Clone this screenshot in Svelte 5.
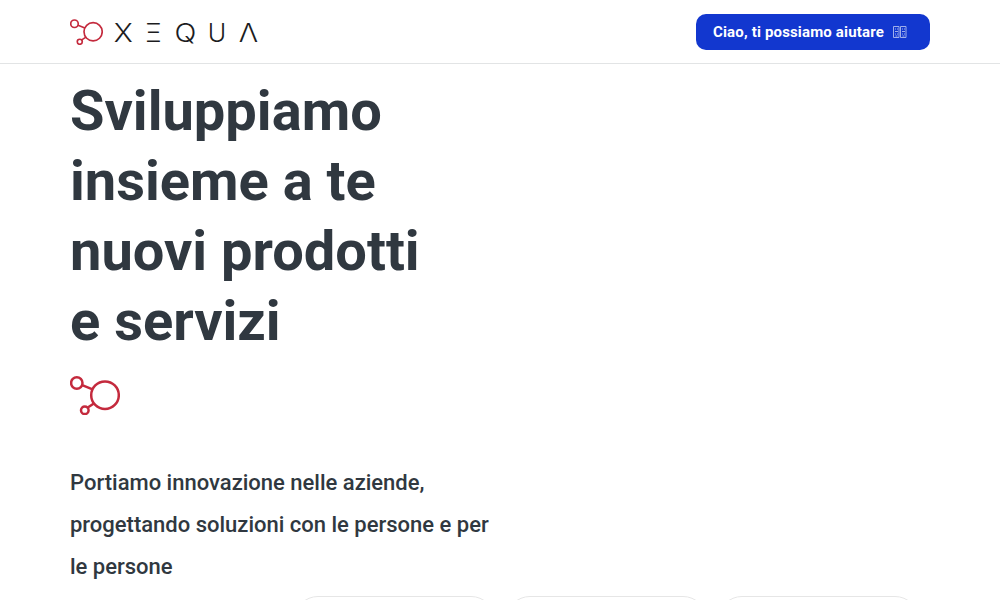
<script lang="ts">
  let wordmark = ['X', 'Ξ', 'Q', 'U', 'Λ'];
  let lines = ['Sviluppiamo', 'insieme a te', 'nuovi prodotti', 'e servizi'];
  let intro = [
    'Portiamo innovazione nelle aziende,',
    'progettando soluzioni con le persone e per',
    'le persone',
  ];
  let cards = [1, 2, 3];
</script>

{#snippet molecule()}
  <svg viewBox="0 0 50 39" fill="none" stroke="#c42a3d" stroke-width="2.5">
    <circle cx="35" cy="19.2" r="13.8" />
    <circle cx="6.8" cy="7" r="5.7" />
    <circle cx="14.8" cy="34.3" r="3.8" />
    <path d="M12.2 9.2 22.6 13.4M17.8 31.5 24.2 27.2" />
  </svg>
{/snippet}

<header>
  <div class="container bar">
    <a class="logo" href="/" aria-label="Xequa">
      {@render molecule()}
      <span class="wordmark">
        {#each wordmark as letter}
          <span class:wide={letter != 'Ξ' && letter != 'U'}>{letter}</span>
        {/each}
      </span>
    </a>
    <button>
      Ciao, ti possiamo aiutare
      <svg class="wave" viewBox="0 0 14 12" fill="none" stroke="#fff">
        <path d="M.5.5h5.5v11H.5zM7.5.5H13v11H7.5z" />
        <path d="M2 3h1M4 3h1M2 5.5h3M2 8h1M4 8h1M2.5 10h2M9 3h1M11 3h1M9 5.5h3M9 8h1M11 8h1M9.5 10h2" />
      </svg>
    </button>
  </div>
</header>

<main class="container">
  <h1>
    {#each lines as line}
      <span>{line}</span>
    {/each}
  </h1>
  <div class="mark">{@render molecule()}</div>
  <p>
    {#each intro as line}
      <span>{line}</span>
    {/each}
  </p>
  <div class="cards">
    {#each cards as card (card)}
      <div class="card"></div>
    {/each}
  </div>
</main>

<style>
  :global(body) {
    overflow: hidden;
    height: 600px;
    background-color: #fff;
    color: #303840;
    font-family: Roboto, sans-serif;
  }

  .container {
    width: 860px;
    margin: 0 auto;
  }

  header {
    height: 63px;
    border-bottom: 1px solid #e2e4e5;
  }

  .bar {
    height: 63px;
    display: flex;
    justify-content: space-between;
    align-items: center;
  }

  .logo {
    display: flex;
    align-items: center;
    gap: 7px;
    color: #1c1c1e;
    text-decoration: none;
  }

  .logo svg {
    display: block;
    width: 33px;
    height: 26px;
  }

  .wordmark {
    display: grid;
    grid-template-columns: 27px 33px 30px 34px 28px;
    justify-items: center;
    padding-top: 2px;
    font-family: Inter, sans-serif;
    font-size: 25px;
    font-weight: 300;
    line-height: 30px;
  }

  .wide {
    transform: scaleX(1.15);
  }

  button {
    display: flex;
    align-items: center;
    gap: 9px;
    width: 234px;
    height: 36px;
    padding: 0 0 0 17px;
    border: 0;
    border-radius: 10px;
    background-color: #1237cf;
    color: #fff;
    font-family: Roboto, sans-serif;
    font-size: 15px;
    font-weight: 700;
    letter-spacing: 0.16px;
    white-space: nowrap;
    cursor: pointer;
  }

  .wave {
    width: 14px;
    height: 12px;
    opacity: 0.6;
  }

  h1 {
    margin: 0;
    padding-top: 12px;
    font-size: 56px;
    font-weight: 700;
    line-height: 70px;
  }

  h1 span,
  p span {
    display: block;
    white-space: nowrap;
  }

  .mark {
    padding-top: 20px;
  }

  .mark svg {
    display: block;
    width: 50px;
    height: 39px;
  }

  p {
    margin: 47px 0 0;
    font-size: 22px;
    font-weight: 500;
    line-height: 42px;
  }

  .cards {
    display: flex;
    gap: 11px;
    height: 4px;
    overflow: hidden;
    margin: 8px 0 0 224px;
  }

  .card {
    flex: none;
    box-sizing: border-box;
    width: 201px;
    height: 200px;
    border: 1px solid #e6e6e6;
    border-radius: 24px;
  }
</style>
